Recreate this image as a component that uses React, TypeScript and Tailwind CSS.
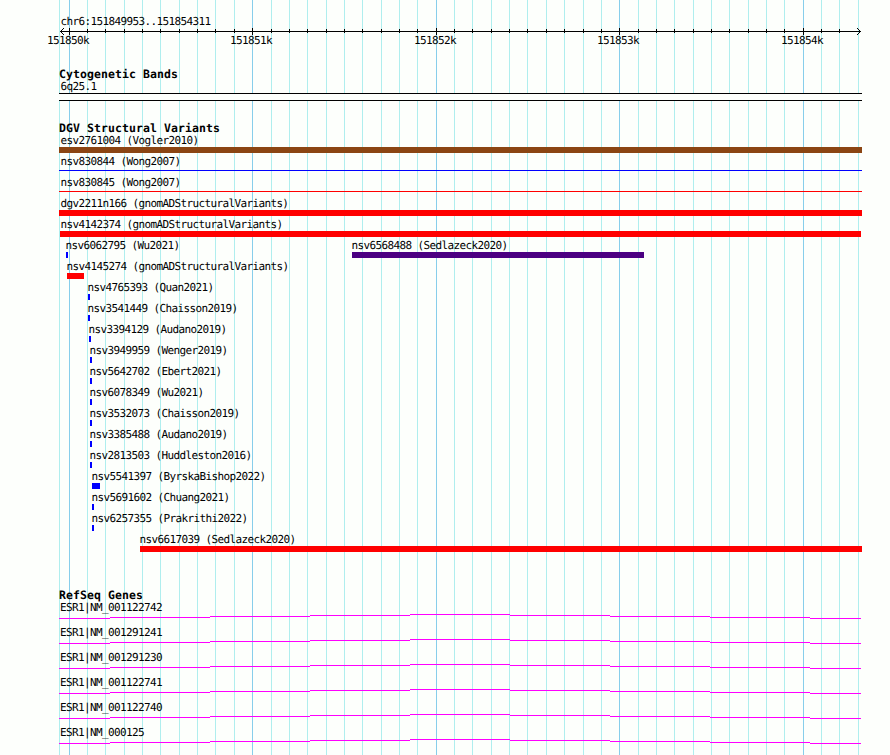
import React from 'react';

interface Variant {
  name: string;
  start: number;
  end: number;
  labelStart: number;
  color: string;
  thin?: boolean;
}

const RED = 'bg-[#ff0000]';
const BLUE = 'bg-[#0000ff]';

// each entry is one row of glyphs, coordinates in px
const variantRows: Variant[][] = [
  [{ name: 'esv2761004 (Vogler2010)', start: 59, end: 862, labelStart: 60, color: 'bg-[#8b4513]' }],
  [{ name: 'nsv830844 (Wong2007)', start: 59, end: 862, labelStart: 60, color: BLUE, thin: true }],
  [{ name: 'nsv830845 (Wong2007)', start: 59, end: 862, labelStart: 60, color: RED, thin: true }],
  [{ name: 'dgv2211n166 (gnomADStructuralVariants)', start: 59, end: 862, labelStart: 60, color: RED }],
  [{ name: 'nsv4142374 (gnomADStructuralVariants)', start: 60, end: 861, labelStart: 60, color: RED }],
  [
    { name: 'nsv6062795 (Wu2021)', start: 66, end: 68, labelStart: 65, color: BLUE },
    { name: 'nsv6568488 (Sedlazeck2020)', start: 352, end: 644, labelStart: 351, color: 'bg-[#4b0082]' },
  ],
  [{ name: 'nsv4145274 (gnomADStructuralVariants)', start: 67, end: 84, labelStart: 66, color: RED }],
  [{ name: 'nsv4765393 (Quan2021)', start: 88, end: 90, labelStart: 87, color: BLUE }],
  [{ name: 'nsv3541449 (Chaisson2019)', start: 88, end: 90, labelStart: 87, color: BLUE }],
  [{ name: 'nsv3394129 (Audano2019)', start: 89, end: 91, labelStart: 88, color: BLUE }],
  [{ name: 'nsv3949959 (Wenger2019)', start: 90, end: 92, labelStart: 89, color: BLUE }],
  [{ name: 'nsv5642702 (Ebert2021)', start: 90, end: 92, labelStart: 89, color: BLUE }],
  [{ name: 'nsv6078349 (Wu2021)', start: 90, end: 92, labelStart: 89, color: BLUE }],
  [{ name: 'nsv3532073 (Chaisson2019)', start: 90, end: 92, labelStart: 89, color: BLUE }],
  [{ name: 'nsv3385488 (Audano2019)', start: 90, end: 92, labelStart: 89, color: BLUE }],
  [{ name: 'nsv2813503 (Huddleston2016)', start: 90, end: 92, labelStart: 89, color: BLUE }],
  [{ name: 'nsv5541397 (ByrskaBishop2022)', start: 92, end: 100, labelStart: 91, color: BLUE }],
  [{ name: 'nsv5691602 (Chuang2021)', start: 92, end: 94, labelStart: 91, color: BLUE }],
  [{ name: 'nsv6257355 (Prakrithi2022)', start: 92, end: 94, labelStart: 91, color: BLUE }],
  [{ name: 'nsv6617039 (Sedlazeck2020)', start: 140, end: 862, labelStart: 139, color: RED }],
];

const genes = [
  'ESR1|NM_001122742',
  'ESR1|NM_001291241',
  'ESR1|NM_001291230',
  'ESR1|NM_001122741',
  'ESR1|NM_001122740',
  'ESR1|NM_000125',
];

const majorTicks = [69, 252, 436, 619, 803];
const majorLabels = ['151850k', '151851k', '151852k', '151853k', '151854k'];
const minorTicks = [
  87, 105, 124, 142, 160, 179, 197, 215, 234, 271, 289, 307, 326, 344, 362, 381, 399, 417,
  454, 472, 491, 509, 527, 546, 564, 583, 601, 638, 656, 674, 693, 711, 729, 748, 766, 784,
  821, 839,
];

const Grid: React.FC = () => (
  <svg className="absolute inset-0" width={890} height={755} shapeRendering="crispEdges">
    {[59, ...minorTicks, 858].map((x) => (
      <rect key={x} x={x} y={0} width={1} height={755} fill="#afeeee" />
    ))}
    {majorTicks.map((x) => (
      <rect key={x} x={x} y={0} width={1} height={755} fill="#87ceeb" />
    ))}
  </svg>
);

const Ruler: React.FC = () => (
  <svg className="block" width={890} height={7} shapeRendering="crispEdges">
    <rect x={60} y={3} width={801} height={1} />
    {minorTicks.map((x) => (
      <rect key={x} x={x} y={1} width={1} height={4} />
    ))}
    {majorTicks.map((x) => (
      <rect key={x} x={x} y={0} width={1} height={7} />
    ))}
    {[0, 1, 2, 3].map((i) => (
      <g key={i}>
        <rect x={60 + i} y={3 - i} width={1} height={1} />
        <rect x={60 + i} y={3 + i} width={1} height={1} />
        <rect x={860 - i} y={3 - i} width={1} height={1} />
        <rect x={860 - i} y={3 + i} width={1} height={1} />
      </g>
    ))}
  </svg>
);

const TrackTitle: React.FC<{ children: React.ReactNode }> = ({ children }) => (
  <h2 className="h-3 pl-[59px] text-[11.5px] font-bold leading-[13px] tracking-[0.076px]">{children}</h2>
);

const VariantRow: React.FC<{ items: Variant[] }> = ({ items }) => (
  <div className="grid h-[21px]">
    {items.map((item) => (
      <div key={item.name} className="col-start-1 row-start-1">
        <div className="w-max pl-[0.4px]" style={{ marginLeft: item.labelStart }}>{item.name}</div>
        <div
          className={`${item.color} ${item.thin ? 'mt-[2px] h-px' : 'h-1.5'}`}
          style={{ marginLeft: item.start, width: item.end - item.start }}
        />
      </div>
    ))}
  </div>
);

const intronSteps = [
  [59, 110, 4], [110, 210, 3], [210, 310, 2], [310, 410, 1], [410, 510, 0],
  [510, 610, 1], [610, 710, 2], [710, 810, 3], [810, 861, 4],
];

const GeneRow: React.FC<{ name: string }> = ({ name }) => (
  <div className="h-[25px]">
    <div className="pl-[60px]">{name}</div>
    <svg className="block" width={890} height={5} shapeRendering="crispEdges">
      {intronSteps.map(([x1, x2, y]) => (
        <rect key={x1} x={x1} y={y} width={x2 - x1} height={1} fill="#ff00ff" />
      ))}
    </svg>
  </div>
);

const App: React.FC = () => {
  return (
    <div className="relative h-[755px] w-[890px] overflow-hidden bg-[#fdfffc] font-['DejaVu_Sans_Mono',monospace] text-[11px] leading-[13px] tracking-[-0.623px] whitespace-pre text-black [text-rendering:geometricPrecision]">
      <Grid />
      <div className="relative pt-[15px]">
        <div className="pl-[60.4px]">chr6:151849953..151854311</div>
        <Ruler />
        <div className="-mt-px grid">
          {majorLabels.map((label, i) => (
            <span
              key={label}
              className="col-start-1 row-start-1 w-max"
              style={{ marginLeft: majorTicks[i] - 22 }}
            >
              {label}
            </span>
          ))}
        </div>

        {/* Cytogenetic Bands */}
        <section className="mt-[21px]">
          <TrackTitle>Cytogenetic Bands</TrackTitle>
          <div className="pl-[60.4px]">6q25.1</div>
          <div className="ml-[59px] h-2 w-[803px] border-y border-black bg-[#fdfffc]" />
        </section>

        {/* DGV Structural Variants */}
        <section className="mt-[21px]">
          <TrackTitle>DGV Structural Variants</TrackTitle>
          {variantRows.map((row) => (
            <VariantRow key={row[0].name} items={row} />
          ))}
        </section>

        {/* RefSeq Genes */}
        <section className="mt-[35px]">
          <TrackTitle>RefSeq Genes</TrackTitle>
          {genes.map((gene) => (
            <GeneRow key={gene} name={gene} />
          ))}
        </section>
      </div>
    </div>
  );
};

export default App;
